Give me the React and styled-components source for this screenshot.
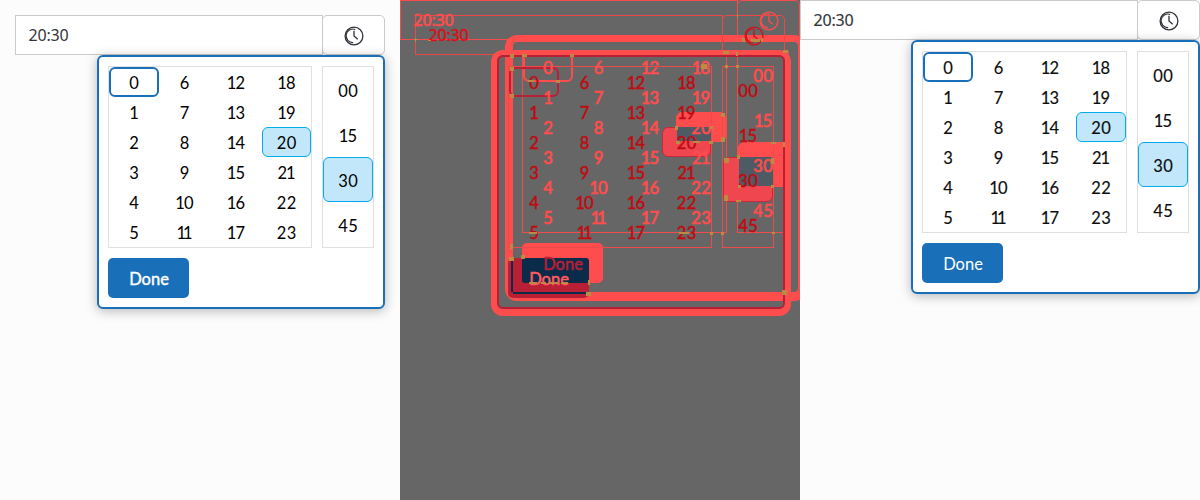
import React from 'react';
import styled, { createGlobalStyle, ThemeProvider } from 'styled-components';

const GlobalStyle = createGlobalStyle`
  *, *::before, *::after { box-sizing: border-box; }
  body { margin: 0; background: #fcfcfc; font-family: Lato, 'Open Sans', sans-serif; }
`;

const light = '#ff4d4d';
const dark = '#b92035';

const normal = {
  surface: '#fff', popup: '#fff', frame: '#cacacd', grid: '#dfdfdf',
  text: '#0c0c0c', inputText: '#333438', icon: '#303038', popupBorder: '#1a70b8',
  focus: '#1a70b8', selected: '#c2e7fa', selectedBorder: '#00adea',
  button: '#1a70b8', buttonText: '#fff',
  shadow: '0 2px 12px rgba(0,0,0,.28)', stroke: 0.15, doneStroke: 0,
};
const candidate = { ...normal, grid: '#e0e0e0', text: '#000', stroke: 0, doneStroke: 0.4 };
const removed = {
  surface: 'transparent', popup: 'transparent', frame: '#f84b4b', grid: '#f14c4c',
  text: light, inputText: light, icon: light, popupBorder: light,
  focus: light, selected: light, selectedBorder: light,
  button: light, buttonText: dark,
  shadow: `0 1px 0 6px ${light}`, stroke: 0.7, doneStroke: 0.5,
};
const added = {
  ...removed, frame: '#ed4747', grid: '#ed4b4b', text: '#c00a10', inputText: '#d8101a', icon: '#cf101a',
  popupBorder: dark, focus: dark, selected: '#ef4650', selectedBorder: '#c72a3a',
  button: dark, buttonText: '#ff5a60', stroke: 0.45, doneStroke: 0.6,
};

const Board = styled.main`
  display: grid;
  grid-template-columns: repeat(3, 400px);
  width: 1200px;
  height: 500px;
  overflow: hidden;
`;
const Panel = styled.section`
  position: relative;
  isolation: isolate;
  overflow: hidden;
  background: ${p => (p.$diff ? '#666' : '#fcfcfc')};
`;
const Layer = styled.div`
  position: absolute;
  inset: 0;
`;
const Field = styled.div`
  display: flex;
  flex-direction: column;
  align-items: flex-end;
  padding: ${p => p.$inset}px;
`;
const InputRow = styled.div`
  display: flex;
  width: 100%;
  height: 40px;
`;
const TimeInput = styled.div`
  flex: 1;
  display: flex;
  align-items: center;
  padding: 0 0 1px 12.5px;
  margin-right: -1px;
  background: ${p => p.theme.surface};
  border: 1px solid ${p => p.theme.frame};
  color: ${p => p.theme.inputText};
  font: 16px 'Noto Sans', sans-serif;
  -webkit-text-stroke: ${p => p.theme.stroke}px;
`;
const ClockButton = styled.div`
  display: grid;
  place-items: center;
  width: 63px;
  padding: 2px 0 0;
  background: ${p => p.theme.surface};
  border: 1px solid ${p => p.theme.frame};
  border-radius: 5px;
  color: ${p => p.theme.icon};
`;
const Popup = styled.div`
  position: relative;
  display: flex;
  flex-direction: column;
  align-items: flex-start;
  gap: 10px;
  padding: 9px;
  background: ${p => p.theme.popup};
  border: 2px solid ${p => p.theme.popupBorder};
  border-radius: 6px;
  box-shadow: ${p => p.theme.shadow};
`;
const Columns = styled.div`
  display: flex;
  gap: 10px;
`;
const Hours = styled.div`
  display: grid;
  grid-auto-flow: column;
  grid-template-rows: repeat(6, 30px);
  grid-template-columns: 50px 51px 1fr ${p => p.$lastColumn}px;
  width: ${p => p.$width}px;
  border: 1px solid ${p => p.theme.grid};
`;
const Minutes = styled.div`
  display: grid;
  grid-template-rows: repeat(4, 45px);
  width: 52px;
  border: 1px solid ${p => p.theme.grid};
`;
const Cell = styled.div`
  display: grid;
  place-items: center;
  padding-top: 2px;
  border: ${p => (p.$focus ? 2 : 1)}px solid
    ${p => (p.$focus ? p.theme.focus : p.$selected ? p.theme.selectedBorder : 'transparent')};
  border-radius: 6px;
  background: ${p => (p.$selected ? p.theme.selected : 'transparent')};
  color: ${p => p.theme.text};
  font-size: 16.5px;
  -webkit-text-stroke: ${p => p.theme.stroke}px;
`;
const Label = styled.span`
  position: relative;
  z-index: 3;
  line-height: 14px;
  letter-spacing: ${p => p.$track || 0}px;
  margin-right: ${p => -(p.$track || 0)}px;
`;
const DoneButton = styled.div`
  display: grid;
  place-items: center;
  width: 81px;
  height: 40px;
  padding: 2px 0 0 1px;
  border-radius: 5px;
  background: ${p => p.theme.button};
  color: ${p => p.theme.buttonText};
  font-size: 16.5px;
  -webkit-text-stroke: ${p => p.theme.doneStroke}px;
`;
const Overlap = styled.div`
  position: absolute;
  z-index: 2;
  left: ${p => p.$x}px;
  top: ${p => p.$y}px;
  width: ${p => p.$w}px;
  height: ${p => p.$h}px;
  border-radius: ${p => p.$r || 0}px;
  background: ${p => p.$color};
`;
const Speck = styled.i`
  position: absolute;
  z-index: 4;
  left: ${p => p.$x}px;
  top: ${p => p.$y}px;
  width: ${p => p.$w}px;
  height: ${p => p.$h}px;
  background: #b98b43;
`;

const Clock = () => (
  <svg width="20" height="20" viewBox="0 0 20 20" fill="none" stroke="currentColor" strokeWidth="1.3">
    <circle cx="10" cy="10" r="8.9" />
    <path d="M11.2 3.4A6.8 6.8 0 1 0 9.2 16.6" strokeWidth="1.1" />
    <path d="M10 4.7V10.1L13.7 13.2" strokeLinejoin="round" />
  </svg>
);

const hours = Array.from({ length: 24 }, (_, i) => i);
const tracking = n => (n === 11 ? -3 : n >= 10 && n < 20 ? -0.8 : n === 21 ? -1 : 0.3);

function TimePicker({ inset = 0, gridWidth = 204, lastColumn = 49 }) {
  return (
    <Field $inset={inset}>
      <InputRow>
        <TimeInput><Label $track={-0.2}>20:30</Label></TimeInput>
        <ClockButton><Clock /></ClockButton>
      </InputRow>
      <Popup>
        <Columns>
          <Hours $width={gridWidth} $lastColumn={lastColumn}>
            {hours.map(h => (
              <Cell key={h} $focus={h === 0} $selected={h === 20}>
                <Label $track={tracking(h)}>{h}</Label>
              </Cell>
            ))}
          </Hours>
          <Minutes>
            {['00', '15', '30', '45'].map(m => (
              <Cell key={m} $selected={m === '30'}>
                <Label $track={m === '15' ? -0.8 : 0.3}>{m}</Label>
              </Cell>
            ))}
          </Minutes>
        </Columns>
        <DoneButton><Label>Done</Label></DoneButton>
      </Popup>
    </Field>
  );
}

const overlaps = [
  [677, 127, 34, 14, '#4e5b64', 2],
  [739, 157, 34, 29, '#4e5b64', 2],
  [522, 258, 67, 25, '#0a2b49', 3],
  [511, 258, 2, 34, '#0a2b49'],
  [513, 292, 76, 2, '#0a2b49'],
];
const specks = [
  [414, 39, 4, 1], [415, 38, 1, 4], [428, 40, 3, 1], [510, 54, 4, 4], [522, 54, 5, 3],
  [570, 54, 4, 3], [510, 67, 4, 4], [510, 94, 4, 4], [556, 80, 4, 3], [528, 80, 6, 2],
  [737, 14, 1, 4], [742, 38, 3, 4], [751, 39, 9, 3], [761, 38, 2, 4], [723, 51, 6, 3],
  [736, 52, 2, 4], [783, 50, 5, 3], [725, 65, 3, 3], [736, 65, 3, 3], [701, 64, 6, 5],
  [675, 126, 3, 4], [710, 126, 3, 3], [721, 113, 4, 4], [721, 137, 4, 5], [676, 141, 4, 3],
  [693, 141, 7, 2], [709, 141, 4, 3], [737, 155, 3, 4], [771, 158, 3, 6], [724, 158, 5, 5],
  [724, 195, 4, 6], [738, 185, 3, 3], [771, 185, 3, 3], [771, 142, 5, 2], [783, 142, 2, 5],
  [510, 244, 3, 5], [509, 257, 5, 4], [521, 255, 4, 4], [588, 280, 2, 5], [586, 292, 5, 4],
  [529, 282, 8, 2], [541, 282, 5, 2], [549, 282, 9, 2], [561, 282, 7, 2], [782, 290, 5, 5],
  [529, 232, 8, 2], [679, 232, 10, 2], [710, 232, 3, 3], [721, 232, 3, 3], [736, 200, 5, 2],
  [772, 232, 3, 2],
];

export default function App() {
  return (
    <>
      <GlobalStyle />
      <Board>
        <ThemeProvider theme={candidate}>
          <Panel><TimePicker inset={15} /></Panel>
        </ThemeProvider>
        <Panel $diff>
          <ThemeProvider theme={removed}>
            <Layer><TimePicker gridWidth={205} lastColumn={50} /></Layer>
          </ThemeProvider>
          <ThemeProvider theme={added}>
            <Layer><TimePicker inset={15} /></Layer>
          </ThemeProvider>
          {overlaps.map(([x, y, w, h, color, r]) => (
            <Overlap key={`${x}-${y}`} $x={x - 400} $y={y} $w={w} $h={h} $color={color} $r={r} />
          ))}
          {specks.map(([x, y, w, h]) => (
            <Speck key={`${x}-${y}`} $x={x - 400} $y={y} $w={w} $h={h} />
          ))}
        </Panel>
        <ThemeProvider theme={normal}>
          <Panel><TimePicker gridWidth={205} lastColumn={50} /></Panel>
        </ThemeProvider>
      </Board>
    </>
  );
}
